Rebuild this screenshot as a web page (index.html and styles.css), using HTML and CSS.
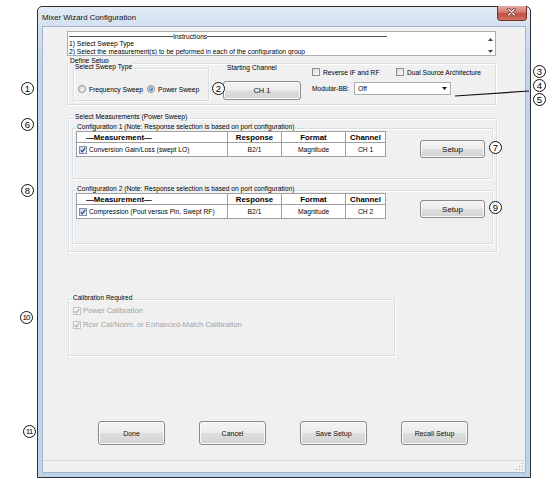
FILE: index.html
```html
<!DOCTYPE html>
<html>
<head>
<meta charset="utf-8">
<title>Mixer Wizard Configuration</title>
<link rel="stylesheet" href="styles.css">
</head>
<body>
<div class="window">
  <div class="titlebar">
    <span class="title">Mixer Wizard Configuration</span>
    <span class="close"><svg width="30" height="15" viewBox="0 0 30 15"><path d="M12 4 L18 10 M18 4 L12 10" stroke="#5a1d16" stroke-width="2.6" stroke-linecap="round"/><path d="M12 4 L18 10 M18 4 L12 10" stroke="#fff" stroke-width="1.4" stroke-linecap="round"/></svg></span>
  </div>
  <div class="client">
    <div class="main">
      <div class="instr">
        <div class="instr-text">
          <div class="instr-head"><span class="rule r1"></span><span>Instructions</span><span class="rule r2"></span></div>
          <div>1) Select Sweep Type</div>
          <div>2) Select the measurement(s) to be peformed in each of the configuration group</div>
        </div>
        <div class="vscroll">
          <svg width="5" height="3" viewBox="0 0 5 3"><path d="M0 3 L2.5 0 L5 3 Z" fill="#444"/></svg>
          <svg width="5" height="3" viewBox="0 0 5 3"><path d="M0 0 L2.5 3 L5 0 Z" fill="#444"/></svg>
        </div>
      </div>

      <div class="grp g-define">
        <div class="legend lg-define">Define Setup</div>
        <div class="define-row">
          <div class="grp g-sweep">
            <div class="legend lg-sweep">Select Sweep Type</div>
            <div class="radio-row">
              <div class="opt opt1"><span class="radio"></span><span class="opt-txt">Frequency Sweep</span></div>
              <div class="opt"><span class="radio on"></span><span class="opt-txt">Power Sweep</span></div>
            </div>
          </div>
          <div class="start-col">
            <div class="start-lbl">Starting Channel</div>
            <div class="btn btn-ch">CH 1</div>
          </div>
          <div class="opts-col">
            <div class="chk-row">
              <div class="opt optr"><span class="cb"></span><span class="opt-txt">Reverse IF and RF</span></div>
              <div class="opt"><span class="cb"></span><span class="opt-txt">Dual Source Architecture</span></div>
            </div>
            <div class="mod-row">
              <span class="mod-lbl">Modular-BB:</span>
              <div class="dd"><span>Off</span><svg class="dd-arrow" width="5" height="3" viewBox="0 0 5 3"><path d="M0 0 L2.5 3 L5 0 Z" fill="#111"/></svg></div>
            </div>
          </div>
        </div>
      </div>

      <div class="grp g-select">
        <div class="legend lg-select">Select Measurements (Power Sweep)</div>
        <div class="grp g-config g-config1">
          <div class="legend lg-config">Configuration 1 (Note: Response selection is based on port configuration)</div>
          <div class="config-row">
            <div class="tbl">
              <div class="th th-meas">—Measurement—</div>
              <div class="th">Response</div>
              <div class="th">Format</div>
              <div class="th">Channel</div>
              <div class="td td-meas"><span class="cb on"><svg width="6" height="6" viewBox="0 0 6 6"><path d="M0.8 3.2 L2.3 4.8 L5.2 0.9" stroke="#2b3f73" stroke-width="1.2" fill="none"/></svg></span><span class="td-txt">Conversion Gain/Loss (swept LO)</span></div>
              <div class="td">B2/1</div>
              <div class="td">Magnitude</div>
              <div class="td">CH 1</div>
            </div>
            <div class="btn btn-setup btn-setup1">Setup</div>
          </div>
        </div>
        <div class="grp g-config g-config2">
          <div class="legend lg-config">Configuration 2 (Note: Response selection is based on port configuration)</div>
          <div class="config-row">
            <div class="tbl">
              <div class="th th-meas">—Measurement—</div>
              <div class="th">Response</div>
              <div class="th">Format</div>
              <div class="th">Channel</div>
              <div class="td td-meas"><span class="cb on"><svg width="6" height="6" viewBox="0 0 6 6"><path d="M0.8 3.2 L2.3 4.8 L5.2 0.9" stroke="#2b3f73" stroke-width="1.2" fill="none"/></svg></span><span class="td-txt">Compression (Pout versus Pin, Swept RF)</span></div>
              <div class="td">B2/1</div>
              <div class="td">Magnitude</div>
              <div class="td">CH 2</div>
            </div>
            <div class="btn btn-setup btn-setup2">Setup</div>
          </div>
        </div>
      </div>

      <div class="grp g-calib">
        <div class="legend lg-calib">Calibration Required</div>
        <div class="cal-item cal1"><span class="cb dis"><svg width="6" height="6" viewBox="0 0 6 6"><path d="M0.8 3.2 L2.3 4.8 L5.2 0.9" stroke="#a8a8a8" stroke-width="1.1" fill="none"/></svg></span><span class="cal-txt">Power Calibration</span></div>
        <div class="cal-item cal2"><span class="cb dis"><svg width="6" height="6" viewBox="0 0 6 6"><path d="M0.8 3.2 L2.3 4.8 L5.2 0.9" stroke="#a8a8a8" stroke-width="1.1" fill="none"/></svg></span><span class="cal-txt">Rcvr Cal/Norm. or Enhanced-Match Calibration</span></div>
      </div>

      <div class="btn-row">
        <div class="btn btn-big">Done</div>
        <div class="btn btn-big">Cancel</div>
        <div class="btn btn-big">Save Setup</div>
        <div class="btn btn-big">Recall Setup</div>
      </div>
    </div>
    <div class="status">
      <svg class="grip" width="8" height="8" viewBox="0 0 8 8">
        <rect x="6" y="0" width="1" height="1" fill="#a9a9a9"/>
        <rect x="6" y="3" width="1" height="1" fill="#a9a9a9"/>
        <rect x="3" y="3" width="1" height="1" fill="#a9a9a9"/>
        <rect x="6" y="6" width="1" height="1" fill="#a9a9a9"/>
        <rect x="3" y="6" width="1" height="1" fill="#a9a9a9"/>
        <rect x="0" y="6" width="1" height="1" fill="#a9a9a9"/>
      </svg>
    </div>
  </div>
</div>

<svg class="leader" width="90" height="20" viewBox="450 84 90 20"><path d="M455 96 L529 91" stroke="#111" stroke-width="1.2"/></svg>

<span class="callout c1">1</span>
<span class="callout c2">2</span>
<span class="callout c3">3</span>
<span class="callout c4">4</span>
<span class="callout c5">5</span>
<span class="callout c6">6</span>
<span class="callout c7">7</span>
<span class="callout c8">8</span>
<span class="callout c9">9</span>
<span class="callout c10 two">10</span>
<span class="callout c11 two">11</span>
</body>
</html>
```

FILE: styles.css
```css
* { box-sizing: border-box; }
html, body { margin: 0; padding: 0; }
body {
  width: 557px;
  height: 487px;
  background: #fff;
  font-family: "Liberation Sans", Arial, sans-serif;
  font-size: 6.7px;
  color: #000;
  position: relative;
  overflow: hidden;
}

/* window frame */
.window {
  margin: 6px 0 0 37px;
  width: 494px;
  height: 472px;
  border: 1px solid #2e2e2e;
  border-radius: 5px 5px 0 0;
  padding: 0 5px 5px;
  background: linear-gradient(#e3ecf7 0px, #d2e0f0 20px, #c3d5ea 60px, #bed2e9 100%);
  display: flex;
  flex-direction: column;
}
.titlebar {
  height: 20px;
  margin: 0 -5px;
  display: flex;
  align-items: center;
}
.title {
  padding-left: 4px;
  font-size: 7.8px;
  color: #111;
}
.close {
  margin-left: auto;
  margin-right: 3px;
  align-self: flex-start;
  margin-top: -1px;
  width: 30px;
  height: 15px;
  border: 1px solid #7a3028;
  border-top: none;
  border-radius: 0 0 4px 4px;
  background: linear-gradient(#e3aaa2 0%, #d27a6e 45%, #c24f3f 55%, #cf7565 100%);
  display: flex;
}
.close svg { margin-left: -1px; margin-top: -1px; }

.client {
  height: 445px;
  background: #f0f0f0;
  box-shadow: 0 0 0 1px #a3b5cc;
  display: flex;
  flex-direction: column;
}
.main {
  height: 433px;
  padding-left: 24px;
  overflow: hidden;
}
.status {
  height: 12px;
  border-top: 1px solid #d9d9d9;
  display: flex;
  justify-content: flex-end;
  align-items: flex-end;
}
.grip { margin: 0 1px 1px 0; }

/* instructions */
.instr {
  margin-top: 4px;
  width: 429px;
  height: 25px;
  border: 1px solid #abadb3;
  background: #fff;
  display: flex;
}
.instr-text {
  flex: 1;
  padding: 1px 0 0 1px;
  line-height: 7.4px;
  white-space: nowrap;
  overflow: hidden;
}
.instr-head { display: flex; align-items: center; height: 7.4px; }
.rule { height: 1px; background: #555; }
.r1 { width: 104px; }
.r2 { width: 180px; }
.vscroll {
  width: 9px;
  display: flex;
  flex-direction: column;
  justify-content: space-between;
  align-items: center;
  padding: 6px 0 2px;
}

/* group boxes */
.grp {
  border: 1px solid #d5dfe5;
  box-shadow: inset 1px 1px 0 #fff, 1px 1px 0 #fff;
}
.legend {
  display: block;
  width: max-content;
  height: 8px;
  line-height: 8px;
  padding: 0 1px;
  background: #f0f0f0;
  white-space: nowrap;
  position: relative;
}

.g-define { margin-top: 7px; width: 429px; height: 42px; }
.lg-define { margin-top: -7px; margin-left: 1px; }
.define-row { display: flex; align-items: flex-start; }

.g-sweep { margin-top: 3px; margin-left: 5px; width: 136px; height: 33px; }
.lg-sweep { margin-top: -6px; margin-left: 0; }
.radio-row { display: flex; margin-top: 14px; margin-left: 4px; height: 8px; }
.opt { display: flex; align-items: center; height: 8px; white-space: nowrap; }
.opt1 { width: 69px; }
.opt-txt { margin-left: 3px; }
.radio {
  width: 8px;
  height: 8px;
  border-radius: 50%;
  border: 1px solid #8e8f8f;
  background: linear-gradient(135deg, #d6d6d6, #fafafa);
  display: flex;
  align-items: center;
  justify-content: center;
  flex: none;
}
.radio.on::after {
  content: "";
  width: 4px;
  height: 4px;
  border-radius: 50%;
  background: radial-gradient(circle at 35% 35%, #9fd0f5, #2a63a8 70%);
}
.cb {
  width: 8px;
  height: 8px;
  border: 1px solid #8e8f8f;
  background: linear-gradient(135deg, #d9d9d9, #fbfbfb);
  display: flex;
  align-items: center;
  justify-content: center;
  flex: none;
}
.cb.on { background: linear-gradient(135deg, #c9d6e6, #eef3f9); border-color: #7f8ea6; }
.cb.dis { border-color: #c4c4c4; background: #f4f4f4; }

.start-col { margin-left: 14px; width: 78px; }
.start-lbl { margin-top: -1px; height: 8px; line-height: 8px; padding-left: 4px; white-space: nowrap; }
.btn {
  border: 1px solid #8a8a8a;
  border-radius: 3px;
  background: linear-gradient(#f4f4f4 0%, #ececec 48%, #dedede 52%, #d2d2d2 100%);
  box-shadow: inset 0 0 0 1px #fbfbfb;
  display: flex;
  align-items: center;
  justify-content: center;
  white-space: nowrap;
  color: #111;
}
.btn-ch { margin-top: 9px; width: 78px; height: 19px; font-size: 7.5px; }

.opts-col { margin-left: 11px; }
.chk-row { display: flex; margin-top: 3px; height: 8px; }
.optr { width: 84px; }
.mod-row { display: flex; align-items: center; margin-top: 6px; height: 13px; }
.mod-lbl { width: 42px; white-space: nowrap; }
.dd {
  width: 97px;
  height: 13px;
  border: 1px solid #abadb3;
  background: #fff;
  display: flex;
  align-items: center;
  padding-left: 3px;
}
.dd-arrow { margin-left: auto; margin-right: 3px; }

/* measurements */
.g-select { margin-top: 13px; margin-left: 1px; width: 429px; height: 134px; }
.lg-select { margin-top: -6px; margin-left: 5px; }
.g-config { margin-left: 3px; width: 421px; }
.g-config1 { margin-top: 7px; height: 51px; }
.g-config2 { margin-top: 11px; height: 54px; }
.lg-config { margin-top: -6px; margin-left: 3px; }
.config-row { display: flex; align-items: flex-start; }

.tbl {
  margin-left: 3px;
  width: 310px;
  display: grid;
  grid-template-columns: 151px 54px 64px 40px;
  grid-template-rows: 11px 14px;
  border-left: 1px solid #a0a0a0;
  border-top: 1px solid #a0a0a0;
  background: #fff;
}
.th, .td {
  border-right: 1px solid #a0a0a0;
  border-bottom: 1px solid #a0a0a0;
  display: flex;
  align-items: center;
  justify-content: center;
  white-space: nowrap;
  overflow: hidden;
}
.th { font-weight: bold; font-size: 7.8px; }
.th-meas { justify-content: flex-start; padding-left: 9px; }
.td-meas { justify-content: flex-start; padding-left: 2px; }
.td-txt { margin-left: 2px; }

.btn-setup { margin-left: 34px; width: 65px; height: 18px; font-size: 8px; }
.btn-setup1 { margin-top: 9px; }
.btn-setup2 { margin-top: 7px; }

/* calibration */
.g-calib { margin-top: 47px; margin-left: 1px; width: 327px; height: 57px; }
.lg-calib { margin-top: -6px; margin-left: 3px; font-size: 6.5px; }
.cal-item { display: flex; align-items: center; height: 9px; margin-left: 4px; }
.cal1 { margin-top: 4px; }
.cal2 { margin-top: 5px; }
.cal-txt { margin-left: 2px; font-size: 7.6px; color: #a3a3a3; white-space: nowrap; }

/* bottom buttons */
.btn-row { display: flex; gap: 34px; margin-top: 65px; margin-left: 31px; }
.btn-big { width: 67px; height: 24px; font-size: 7px; }

/* callouts (annotation layer over the screenshot) */
.leader { position: absolute; left: 450px; top: 84px; }
.callout {
  position: absolute;
  width: 13px;
  height: 13px;
  border: 1px solid #111;
  border-radius: 50%;
  background: #fff;
  font-size: 9.5px;
  line-height: 11px;
  text-align: center;
  color: #000;
}
.callout.two { font-size: 8px; letter-spacing: -0.9px; text-indent: -0.9px; }
.c1 { left: 21px; top: 82px; }
.c2 { left: 212px; top: 82px; }
.c3 { left: 533px; top: 65px; }
.c4 { left: 533px; top: 79px; }
.c5 { left: 533px; top: 93px; }
.c6 { left: 21px; top: 118px; }
.c7 { left: 489px; top: 141px; }
.c8 { left: 21px; top: 184px; }
.c9 { left: 489px; top: 201px; }
.c10 { left: 20px; top: 311px; }
.c11 { left: 23px; top: 425px; }
```
